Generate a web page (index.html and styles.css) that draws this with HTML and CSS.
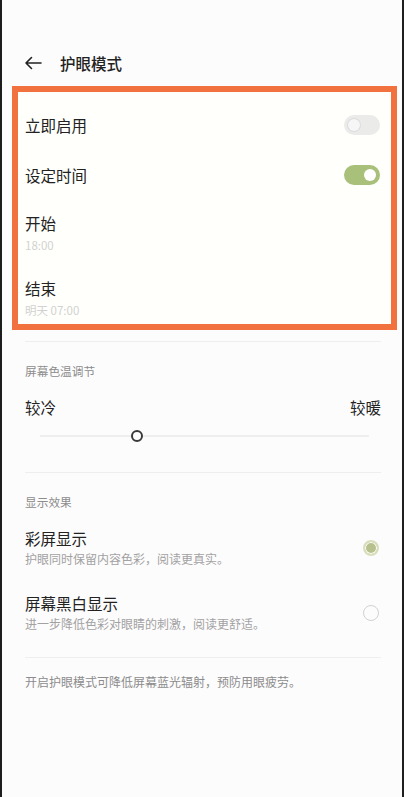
FILE: index.html
```html
<!DOCTYPE html>
<html lang="zh-CN">
<head>
  <meta charset="UTF-8">
  <title>护眼模式</title>
  <link rel="stylesheet" href="styles.css">
</head>
<body>
  <div class="screen">
    <div class="topbar">
      <svg class="back" width="18" height="14" viewBox="0 0 18 14">
        <path d="M17 7H2M7.5 1.5L2 7l5.5 5.5" fill="none" stroke="#222" stroke-width="1.6" stroke-linecap="round" stroke-linejoin="round"/>
      </svg>
      <span class="title">护眼模式</span>
    </div>

    <div class="highlight">
      <div class="row">
        <span class="label">立即启用</span>
        <span class="switch"><span class="knob"></span></span>
      </div>
      <div class="row">
        <span class="label">设定时间</span>
        <span class="switch on"><span class="knob"></span></span>
      </div>
      <div class="item first">
        <div class="label">开始</div>
        <div class="time">18:00</div>
      </div>
      <div class="item last">
        <div class="label">结束</div>
        <div class="time">明天 07:00</div>
      </div>
    </div>

    <div class="section">
      <div class="section-title">屏幕色温调节</div>
      <div class="range-labels">
        <span class="label">较冷</span>
        <span class="label">较暖</span>
      </div>
      <div class="slider">
        <div class="track"></div>
        <span class="thumb" style="left: 29.5%"></span>
      </div>
    </div>

    <div class="section">
      <div class="section-title">显示效果</div>
      <div class="option">
        <div>
          <div class="label">彩屏显示</div>
          <div class="desc">护眼同时保留内容色彩，阅读更真实。</div>
        </div>
        <span class="radio checked"></span>
      </div>
      <div class="option">
        <div>
          <div class="label">屏幕黑白显示</div>
          <div class="desc">进一步降低色彩对眼睛的刺激，阅读更舒适。</div>
        </div>
        <span class="radio"></span>
      </div>
    </div>

    <div class="note">开启护眼模式可降低屏幕蓝光辐射，预防用眼疲劳。</div>
  </div>
</body>
</html>
```

FILE: styles.css
```css
body {
  margin: 0;
  font-family: "Noto Sans CJK SC", "Noto Sans", sans-serif;
  color: #222;
  background: #fdfcfd;
}

.screen {
  box-sizing: border-box;
  width: 404px;
  min-height: 797px;
  border-left: 2px solid #1e1e1e;
  border-right: 2px solid #1e1e1e;
  background: #fdfcfd;
}

.topbar {
  display: flex;
  align-items: center;
  height: 30px;
  padding: 48px 0 8px 22px;
}

.back {
  margin-right: 18px;
}

.title {
  font-size: 15.5px;
  font-weight: 500;
}

/* orange frame round the schedule settings */
.highlight {
  box-sizing: border-box;
  height: 244px;
  margin: 0 5px 0 10px;
  padding: 8px 0 0;
  border: 6px solid #f1713f;
  background: #fffffb;
}

.label {
  font-size: 15.5px;
  line-height: 22px;
  color: #222;
}

.row {
  display: flex;
  align-items: center;
  justify-content: space-between;
  height: 50px;
  padding: 0 11px 0 7px;
}

.switch {
  position: relative;
  width: 36px;
  height: 20px;
  border-radius: 10px;
  background: #ebebea;
}

.switch .knob {
  position: absolute;
  top: 4px;
  left: 4px;
  width: 12px;
  height: 12px;
  border-radius: 50%;
  background: #f6f6f6;
  box-shadow: 0 0 0 1px #dcdcdc;
}

.switch.on {
  background: #a9c07b;
}

.switch.on .knob {
  left: auto;
  right: 4px;
  background: #fff;
  box-shadow: none;
}

.item {
  padding: 12px 7px 0;
}

.item.first {
  height: 53px;
}

.time {
  margin-top: 2px;
  font-size: 11.5px;
  line-height: 18px;
  color: #d2d2d2;
}

.section {
  margin: 11px 21px 0 23px;
  border-top: 1px solid #efeeef;
  padding-top: 20px;
}

.section + .section {
  margin-top: 0;
}

.section-title {
  font-size: 11.7px;
  line-height: 18px;
  color: #8c8c8c;
}

.range-labels {
  display: flex;
  justify-content: space-between;
  margin-top: 16px;
}

.slider {
  position: relative;
  height: 16px;
  margin: 10px 12px 28px 15px;
}

.track {
  position: absolute;
  top: 7px;
  left: 0;
  right: 0;
  height: 2px;
  background: #efeeee;
}

.thumb {
  position: absolute;
  top: 2px;
  width: 8px;
  height: 8px;
  margin-left: -6px;
  border: 2px solid #3a3a3a;
  border-radius: 50%;
  background: #fff;
}

.option {
  display: flex;
  align-items: center;
  justify-content: space-between;
  padding-top: 16px;
}

.option + .option {
  padding-top: 24px;
  padding-bottom: 24px;
}

.desc {
  margin-top: 1px;
  font-size: 12px;
  line-height: 18px;
  color: #a2a2a2;
}

.radio {
  box-sizing: border-box;
  width: 16px;
  height: 16px;
  margin-right: 2px;
  border: 1.5px solid #d2d2d2;
  border-radius: 50%;
}

.radio.checked {
  border: 2px solid #d9dfbd;
  background: #b6c18e;
  box-shadow: inset 0 0 0 1px #fff;
}

.note {
  margin: 0 21px 0 23px;
  border-top: 1px solid #efeeef;
  padding-top: 15px;
  font-size: 12px;
  line-height: 18px;
  color: #8c8c8c;
}
```
